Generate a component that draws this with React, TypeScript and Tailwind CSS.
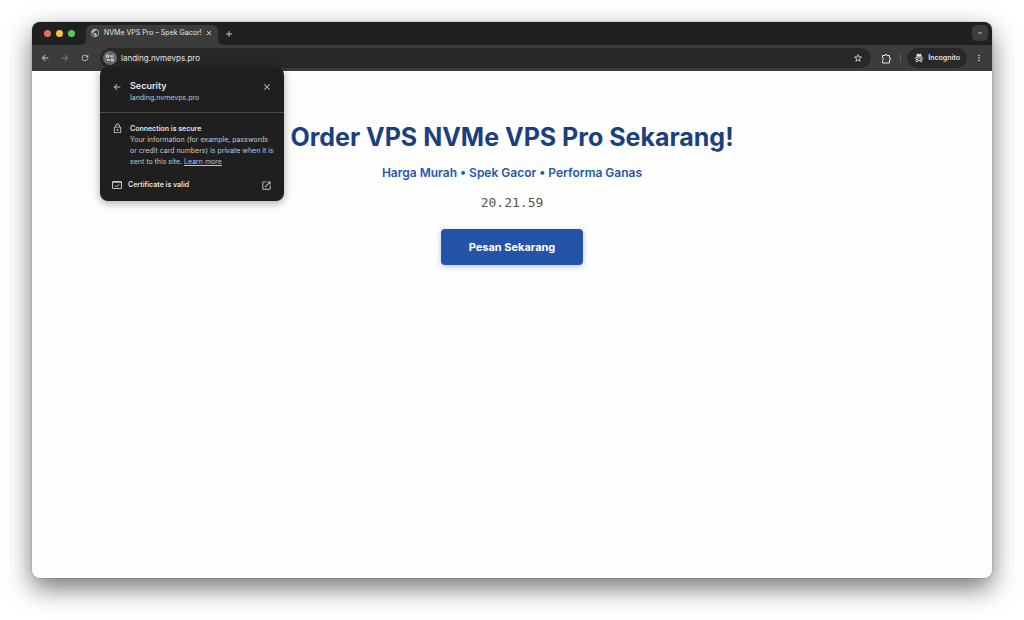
import {
  MdAdd,
  MdArrowBack,
  MdArrowForward,
  MdClose,
  MdExpandMore,
  MdMoreVert,
  MdOpenInNew,
  MdOutlineLock,
  MdPublic,
  MdRefresh,
  MdStarBorder,
} from "react-icons/md"

function TuneIcon() {
  return (
    <svg viewBox="0 0 16 16" className="size-2.5" fill="none" stroke="currentColor" strokeWidth="1.7">
      <circle cx="4" cy="5" r="1.7" />
      <path d="M8 5h5.5M2.5 11H8" />
      <circle cx="12" cy="11" r="1.7" />
    </svg>
  )
}

function ExtensionIcon() {
  return (
    <svg viewBox="0 0 22 22" className="size-[11px]" fill="none" stroke="currentColor" strokeWidth="2">
      <path
        d="M3 5h5V3.4h4V5h5v5h1.6v4H17v6H3v-5a2.6 2.6 0 0 0 0-5z"
        strokeLinejoin="round"
      />
    </svg>
  )
}

function IncognitoIcon() {
  return (
    <svg viewBox="0 0 20 20" className="size-2.5" fill="currentColor">
      <path d="M6 1.5h2.2L10 2.3l1.8-.8H14l1.8 6.2H4.2zM1.5 9h17v2h-17z" />
      <path
        d="M8.2 15.2q1.8-1.2 3.6 0"
        fill="none"
        stroke="currentColor"
        strokeWidth="1.7"
      />
      <circle cx="5.9" cy="15" r="2.3" fill="none" stroke="currentColor" strokeWidth="1.9" />
      <circle cx="14.1" cy="15" r="2.3" fill="none" stroke="currentColor" strokeWidth="1.9" />
    </svg>
  )
}

function CertificateIcon() {
  return (
    <svg viewBox="0 0 20 16" className="h-2 w-2.5 text-[#c7c7c7]" fill="none" stroke="currentColor" strokeWidth="2">
      <rect x="1" y="1" width="18" height="14" rx="1" />
      <path d="M1 2.5h18" />
      <path d="M6 9l3 3 5-5.5" />
    </svg>
  )
}

function TabBar() {
  return (
    <div className="flex h-[23px] items-end justify-between bg-[#1f2120] pr-1 pl-3">
      <div className="flex items-end">
        <div className="flex h-[23px] items-center gap-[5px] pr-[11px]">
          <span className="size-[7px] rounded-full bg-[#ed6a5e]" />
          <span className="size-[7px] rounded-full bg-[#f5bf4f]" />
          <span className="size-[7px] rounded-full bg-[#61c554]" />
        </div>
        <div className="relative flex h-5 w-[132px] items-center rounded-t-md bg-[#3c3c3c] pr-[5px] pb-1 pl-1 text-[#e3e3e3]">
          <svg viewBox="0 0 5 5" className="absolute bottom-0 -left-[5px] size-[5px]" fill="#3c3c3c">
            <path d="M5 0v5H0a5 5 0 0 0 5-5" />
          </svg>
          <svg viewBox="0 0 5 5" className="absolute -right-[5px] bottom-0 size-[5px]" fill="#3c3c3c">
            <path d="M0 0v5h5a5 5 0 0 1-5-5" />
          </svg>
          <MdPublic className="size-2.5 text-[#a9adb5]" />
          <span className="ml-1 flex-1 text-[7px] leading-3 whitespace-nowrap">
            NVMe VPS Pro – Spek Gacor!
          </span>
          <button aria-label="Close tab">
            <MdClose className="size-2" />
          </button>
        </div>
        <button aria-label="New tab" className="mb-1.5 ml-1.5 text-[#d0d0d0]">
          <MdAdd className="size-2.5" />
        </button>
      </div>
      <button
        aria-label="Search tabs"
        className="mb-1 flex size-4 items-center justify-center rounded-[5px] bg-[#3c3c3c] text-[#e3e3e3]"
      >
        <MdExpandMore className="size-2" />
      </button>
    </div>
  )
}

function SecurityPopup() {
  return (
    <section className="absolute top-[19px] left-0 z-10 w-[184px] rounded-lg bg-[#1f1f1f] pb-2.5 text-[#e3e3e3] shadow-[0_2px_8px_rgba(0,0,0,0.35)]">
      <header className="flex items-start gap-2 border-b border-[#4a4a4a] px-3 pt-[13px] pb-[9px]">
        <button aria-label="Back" className="mt-0.5 text-[#c7c7c7]">
          <MdArrowBack className="size-2.5" />
        </button>
        <div className="flex-1">
          <h2 className="text-[9px] leading-3 font-semibold">Security</h2>
          <p className="text-[7px] leading-[11px] text-[#c7c7c7]">landing.nvmevps.pro</p>
        </div>
        <button aria-label="Close" className="mt-0.5 text-[#c7c7c7]">
          <MdClose className="size-2.5" />
        </button>
      </header>
      <div className="flex gap-[7px] px-3 pt-2.5">
        <MdOutlineLock className="size-[11px] shrink-0 text-[#c7c7c7]" />
        <div className="text-[7px] whitespace-nowrap text-[#c7c7c7]">
          <h3 className="leading-[11px] font-semibold text-[#e3e3e3]">Connection is secure</h3>
          <p className="leading-[11px]">
            Your information (for example, passwords
            <br />
            or credit card numbers) is private when it is
            <br />
            sent to this site.{" "}
            <a href="#" className="text-[#a8c7fa] underline">
              Learn more
            </a>
          </p>
        </div>
      </div>
      <button className="mt-3 flex w-full items-center gap-1.5 px-3">
        <CertificateIcon />
        <span className="flex-1 text-left text-[7px] leading-3 font-semibold">Certificate is valid</span>
        <MdOpenInNew className="size-[11px] text-[#c7c7c7]" />
      </button>
    </section>
  )
}

function Toolbar() {
  return (
    <div className="flex h-[26px] items-center bg-[#3c3c3c] px-2 text-[#e3e3e3]">
      <nav className="flex gap-2.5 pr-2.5">
        <button aria-label="Back">
          <MdArrowBack className="size-2.5 text-[#c7c7c7]" />
        </button>
        <button aria-label="Forward">
          <MdArrowForward className="size-2.5 text-[#7d7d7d]" />
        </button>
        <button aria-label="Reload">
          <MdRefresh className="size-2.5 text-[#c7c7c7]" />
        </button>
      </nav>
      <div className="relative flex h-5 flex-1 items-center rounded-full bg-[#282828] pr-2 pl-[3px]">
        <button
          aria-label="View site information"
          className="flex size-3.5 items-center justify-center rounded-full bg-[#686868]"
        >
          <TuneIcon />
        </button>
        <input
          aria-label="Address"
          defaultValue="landing.nvmevps.pro"
          className="ml-1 min-w-0 flex-1 bg-transparent text-[8px] leading-4 outline-none"
        />
        <button aria-label="Bookmark this page">
          <MdStarBorder className="size-2.5" />
        </button>
        <SecurityPopup />
      </div>
      <button aria-label="Extensions" className="ml-2.5">
        <ExtensionIcon />
      </button>
      <span className="mr-1.5 ml-2 h-2 w-px bg-[#5e5e5e]" />
      <button className="flex h-5 items-center gap-1 rounded-full bg-[#282828] px-[7px] text-[7px] font-semibold">
        <IncognitoIcon />
        Incognito
      </button>
      <button aria-label="Menu" className="ml-[7px]">
        <MdMoreVert className="size-2.5" />
      </button>
    </div>
  )
}

export default function App() {
  return (
    <div className="flex min-h-screen flex-col bg-white px-8 pt-[22px] pb-[42px] font-[Inter,sans-serif]">
      <div className="flex flex-1 flex-col rounded-lg shadow-[0_0_1px_rgba(0,0,0,0.8),0_10px_26px_rgba(0,0,0,0.55)]">
        <div className="relative z-10">
          <div className="overflow-hidden rounded-t-lg">
            <TabBar />
          </div>
          <Toolbar />
        </div>
        <main className="flex flex-1 flex-col items-center rounded-b-lg bg-[#fefefe] pt-12 text-center">
          <h1 className="text-[25px] leading-9 font-bold text-[#1a4080]">
            Order VPS NVMe VPS Pro Sekarang!
          </h1>
          <p className="mt-2 text-xs leading-5 font-semibold text-[#2556b0]">
            Harga Murah • Spek Gacor • Performa Ganas
          </p>
          <time className="mt-2 font-['DejaVu_Sans_Mono',monospace] text-[13px] leading-6 text-[#555555]">
            20.21.59
          </time>
          <button className="mt-3.5 h-9 rounded bg-[#2453aa] px-7 text-[11px] font-bold text-white shadow-[0_2px_6px_rgba(36,83,170,0.3)]">
            Pesan Sekarang
          </button>
        </main>
      </div>
    </div>
  )
}
